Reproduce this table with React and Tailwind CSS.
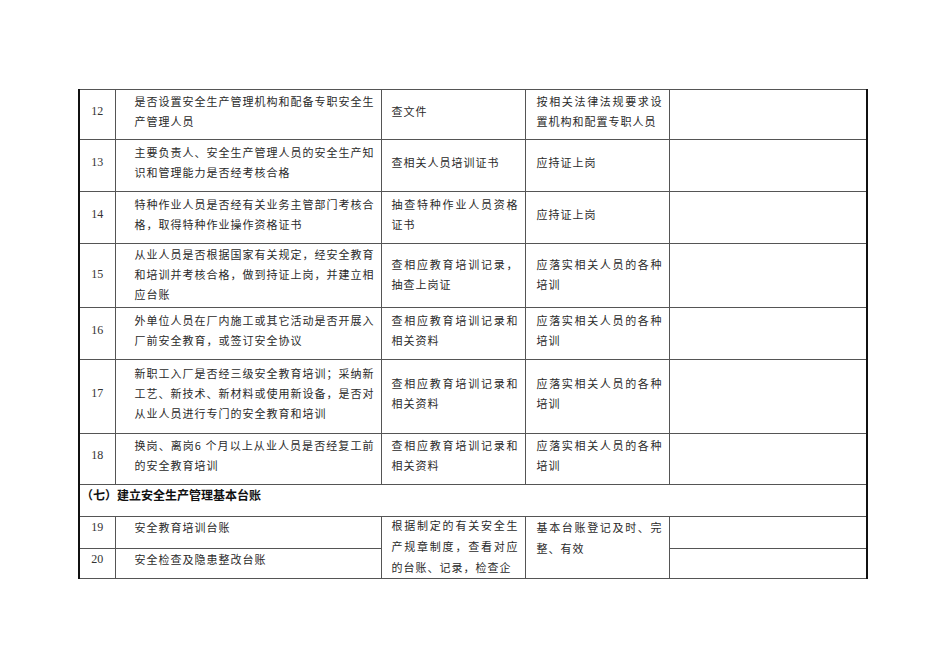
import React from "react";

// 表格数据：每个单元格按行拆开，除最后一行外两端对齐
const rows = [
  {
    no: "12",
    h: "h-[50px]",
    pb: "pb-2",
    item: ["是否设置安全生产管理机构和配备专职安全生", "产管理人员"],
    method: ["查文件"],
    standard: ["按相关法律法规要求设", "置机构和配置专职人员"],
  },
  {
    no: "13",
    h: "h-[52px]",
    pb: "pb-2",
    item: ["主要负责人、安全生产管理人员的安全生产知", "识和管理能力是否经考核合格"],
    method: ["查相关人员培训证书"],
    standard: ["应持证上岗"],
  },
  {
    no: "14",
    h: "h-[52px]",
    pb: "pb-2",
    item: ["特种作业人员是否经有关业务主管部门考核合", "格，取得特种作业操作资格证书"],
    method: ["抽查特种作业人员资格", "证书"],
    standard: ["应持证上岗"],
  },
  {
    no: "15",
    h: "h-[64px]",
    pb: "pb-[3px]",
    item: [
      "从业人员是否根据国家有关规定，经安全教育",
      "和培训并考核合格，做到持证上岗，并建立相",
      "应台账",
    ],
    method: ["查相应教育培训记录，", "抽查上岗证"],
    standard: ["应落实相关人员的各种", "培训"],
  },
  {
    no: "16",
    h: "h-[52px]",
    pb: "pb-2",
    item: ["外单位人员在厂内施工或其它活动是否开展入", "厂前安全教育，或签订安全协议"],
    method: ["查相应教育培训记录和", "相关资料"],
    standard: ["应落实相关人员的各种", "培训"],
  },
  {
    no: "17",
    h: "h-[74px]",
    pb: "pb-2",
    item: [
      "新职工入厂是否经三级安全教育培训；采纳新",
      "工艺、新技术、新材料或使用新设备，是否对",
      "从业人员进行专门的安全教育和培训",
    ],
    method: ["查相应教育培训记录和", "相关资料"],
    standard: ["应落实相关人员的各种", "培训"],
  },
  {
    no: "18",
    h: "h-[51px]",
    pb: "pb-2",
    item: ["换岗、离岗6 个月以上从业人员是否经复工前", "的安全教育培训"],
    method: ["查相应教育培训记录和", "相关资料"],
    standard: ["应落实相关人员的各种", "培训"],
  },
];

const Lines = ({ lines }) => (
  <>
    {lines.map((line, i) =>
      i < lines.length - 1 ? (
        <div key={i} className="text-justify [text-align-last:justify]">
          {line}
        </div>
      ) : (
        <div key={i}>{line}</div>
      )
    )}
  </>
);

const cell = "border border-[#555] p-0";

export default function App() {
  return (
    <div className="min-h-[672px] w-[950px] bg-white pt-[89px] pl-[78px] font-['Noto_Sans_CJK_SC',sans-serif] text-[11px] leading-[20px] tracking-[1px] text-[#2a2a2a]">
      <table className="w-[788px] table-fixed border-collapse border-l-2 border-r-2 border-l-[#111] border-r-[#111]">
        <colgroup>
          <col className="w-[36px]" />
          <col className="w-[266px]" />
          <col className="w-[144px]" />
          <col className="w-[144px]" />
          <col className="w-[198px]" />
        </colgroup>
        <tbody>
          {rows.map((r) => (
            <tr key={r.no} className={r.h}>
              <td className={`${cell} ${r.pb} text-center align-middle font-['Liberation_Serif',serif] text-[12px] tracking-normal text-[#333]`}>
                {r.no}
              </td>
              <td className={`${cell} ${r.pb} pl-[19px] pr-[6px] align-middle`}>
                <Lines lines={r.item} />
              </td>
              <td className={`${cell} ${r.pb} pl-[10px] pr-[6px] align-middle`}>
                <Lines lines={r.method} />
              </td>
              <td className={`${cell} ${r.pb} pl-[11px] pr-[6px] align-middle`}>
                <Lines lines={r.standard} />
              </td>
              <td className={cell}></td>
            </tr>
          ))}

          {/* （七）建立安全生产管理基本台账 */}
          <tr className="h-[32px]">
            <td colSpan={5} className={`${cell} pl-[1px] align-top text-[12px] font-bold tracking-normal text-[#111]`}>
              （七）建立安全生产管理基本台账
            </td>
          </tr>

          <tr className="h-[32px]">
            <td className={`${cell} align-top text-center font-['Liberation_Serif',serif] text-[12px] tracking-normal text-[#333]`}>
              19
            </td>
            <td className={`${cell} pl-[19px] align-top`}>安全教育培训台账</td>
            <td rowSpan={2} className={`${cell} pl-[10px] pr-[6px] align-top leading-[21px]`}>
              <div className="-mt-[2px]">
                <Lines lines={["根据制定的有关安全生", "产规章制度，查看对应", "的台账、记录，检查企"]} />
              </div>
            </td>
            <td rowSpan={2} className={`${cell} pl-[11px] pr-[6px] align-top leading-[21px]`}>
              <Lines lines={["基本台账登记及时、完", "整、有效"]} />
            </td>
            <td className={cell}></td>
          </tr>
          <tr className="h-[30px]">
            <td className={`${cell} align-top text-center font-['Liberation_Serif',serif] text-[12px] tracking-normal text-[#333]`}>
              20
            </td>
            <td className={`${cell} pl-[19px] align-top`}>安全检查及隐患整改台账</td>
            <td className={cell}></td>
          </tr>
        </tbody>
      </table>
    </div>
  );
}
